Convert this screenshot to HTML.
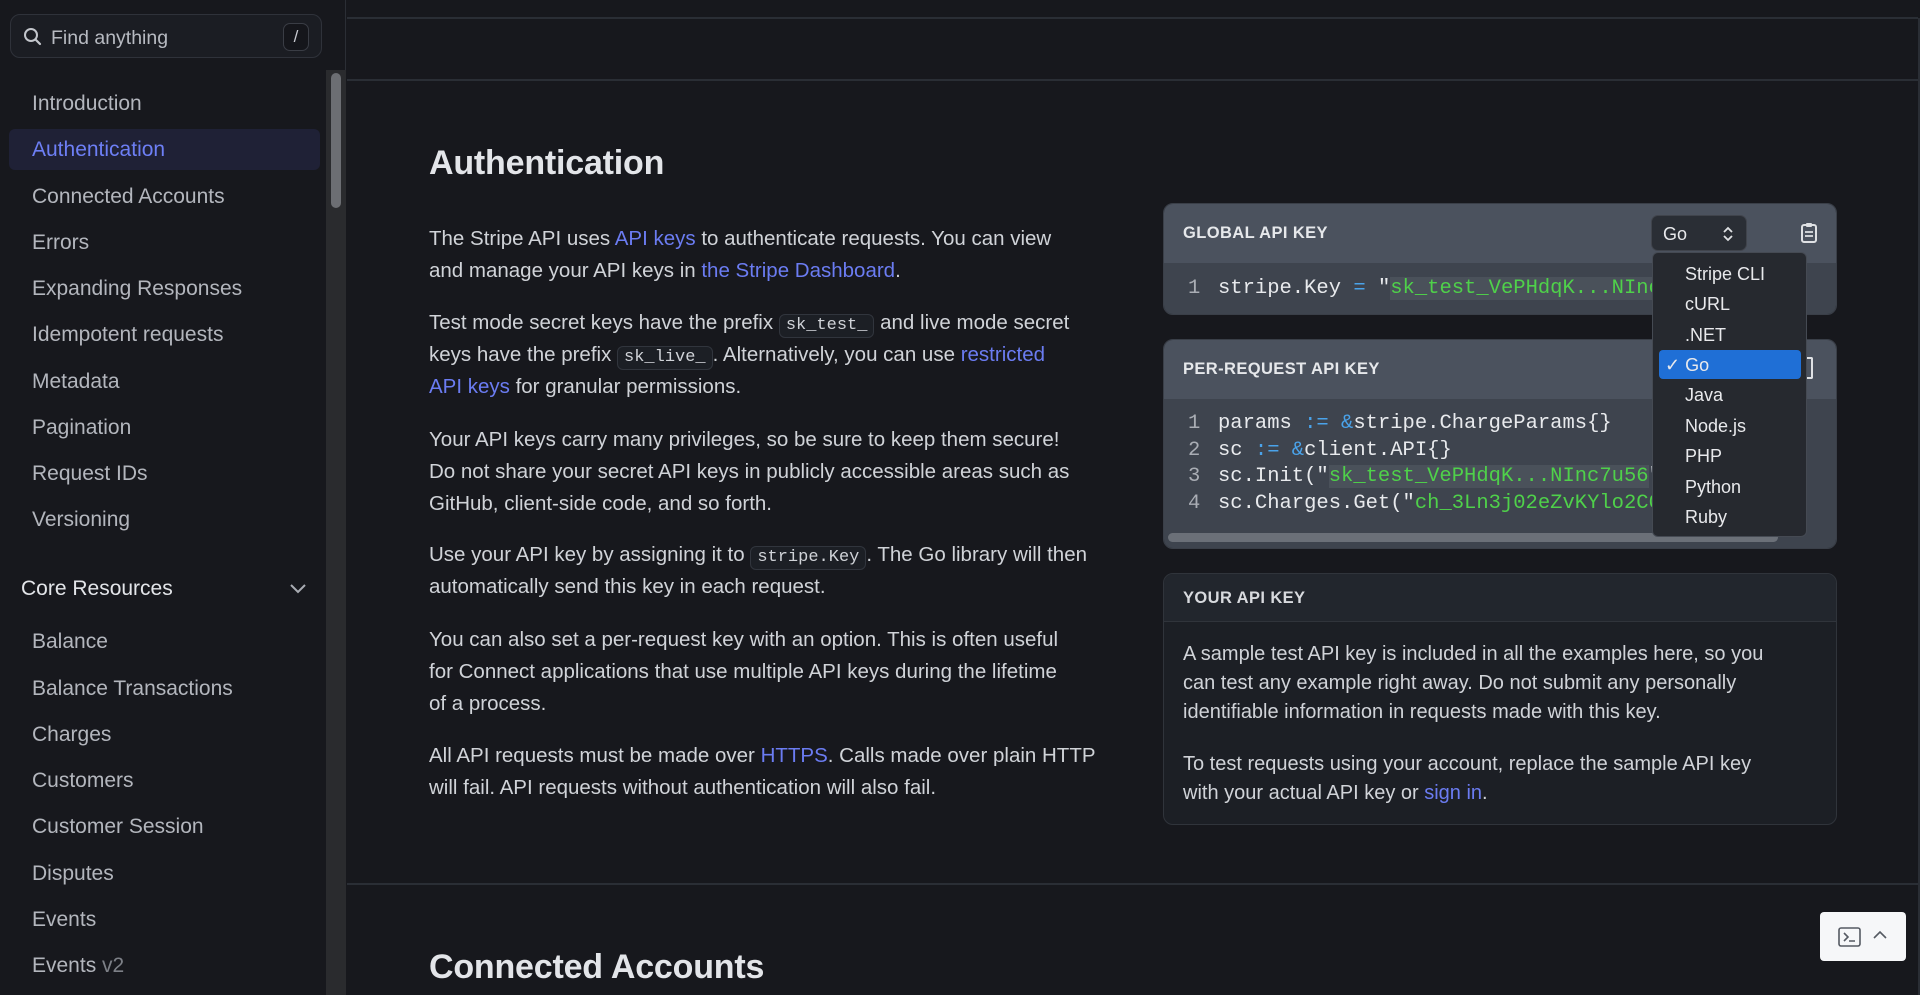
<!DOCTYPE html>
<html><head><meta charset="utf-8"><style>
*{box-sizing:border-box;margin:0;padding:0}
html,body{width:1920px;height:995px;overflow:hidden;background:#17181d;font-family:"Liberation Sans",sans-serif;color:#d4d6db}
.sb{position:absolute;left:0;top:0;width:346px;height:995px;background:#17181d;border-right:1px solid #2b2e35}
.search{position:absolute;left:10px;top:14px;width:312px;height:44px;border:1px solid #2f323a;border-radius:10px;background:#1b1d23}
.search span{position:absolute;left:40px;top:12px;font-size:19.5px;color:#b7bac1}
.kbd{position:absolute;right:12px;top:8px;width:26px;height:28px;border:1px solid #3a3d45;border-radius:7px;color:#c8cad0;font-size:17px;text-align:center;line-height:26px;background:#15161b}
.track{position:absolute;left:326px;top:70px;width:20px;height:925px;background:#2a2b2e}
.thumb{position:absolute;left:331px;top:73px;width:10px;height:135px;background:#6c6e73;border-radius:5px}
.nav{position:absolute;left:32px;font-size:21px;color:#b3b6bd}
.act{position:absolute;left:9px;top:129px;width:311px;height:41px;background:#1f2136;border-radius:6px}
.hl{position:absolute;left:347px;right:2px;height:2px;background:#2a2e35}
h1{position:absolute;left:429px;font-size:34px;font-weight:bold;color:#e3e5e9;letter-spacing:-0.2px}
.p{position:absolute;left:429px;font-size:20.5px;line-height:32px;color:#d0d3d8;white-space:nowrap}
a{color:#6b7cf2;text-decoration:none}
code{font-family:"Liberation Mono",monospace;font-size:17px;background:#1c1f25;border:1px solid #31353d;border-radius:6px;padding:1px 6px;line-height:20px;display:inline-block;vertical-align:baseline}
.card{position:absolute;left:1163px;width:674px;border-radius:10px;overflow:hidden;border:1px solid #3a3f48}
.ch{height:59px;background:#4b525e;padding-left:19px;font-size:16.5px;font-weight:bold;letter-spacing:.4px;line-height:59px;color:#e6e8eb}
.cb{background:#3e444e;font-family:"Liberation Mono",monospace;font-size:20.5px;color:#e8eaed;padding-left:24px;white-space:pre}
.ln{color:#a9adb4;display:inline-block;width:30px}
.g{color:#4fd14a;background:#4a515a}
.g2{color:#4fd14a}
.o{color:#4aa3ea}
.menu{position:absolute;left:1652px;top:252px;width:155px;height:285px;background:#26292f;border:1px solid #454a53;border-radius:6px}
.mi{position:absolute;left:32px;font-size:18px;color:#e8e9ec}
</style></head><body>
<div class="sb">
 <div class="search"><svg style="position:absolute;left:12px;top:12px" width="20" height="20" viewBox="0 0 20 20"><circle cx="8" cy="8" r="6" fill="none" stroke="#c3c6cc" stroke-width="2"/><path d="M12.5 12.5 L17 17" stroke="#c3c6cc" stroke-width="2.2" stroke-linecap="round"/></svg><span>Find anything</span><div class="kbd">/</div></div>
 <div class="track"></div><div class="thumb"></div>
 <div class="act"></div>
 <div class="nav" style="top:92px">Introduction</div>
 <div class="nav" style="top:138px;color:#6d7ff5">Authentication</div>
 <div class="nav" style="top:185px">Connected Accounts</div>
 <div class="nav" style="top:231px">Errors</div>
 <div class="nav" style="top:277px">Expanding Responses</div>
 <div class="nav" style="top:323px">Idempotent requests</div>
 <div class="nav" style="top:370px">Metadata</div>
 <div class="nav" style="top:416px">Pagination</div>
 <div class="nav" style="top:462px">Request IDs</div>
 <div class="nav" style="top:508px">Versioning</div>
 <div class="nav" style="top:577px;left:21px;color:#e3e5e9;font-size:21px">Core Resources</div>
 <svg style="position:absolute;left:289px;top:583px" width="18" height="12" viewBox="0 0 18 12"><path d="M2 2 L9 9 L16 2" fill="none" stroke="#a9acb3" stroke-width="2"/></svg>
 <div class="nav" style="top:630px">Balance</div>
 <div class="nav" style="top:677px">Balance Transactions</div>
 <div class="nav" style="top:723px">Charges</div>
 <div class="nav" style="top:769px">Customers</div>
 <div class="nav" style="top:815px">Customer Session</div>
 <div class="nav" style="top:862px">Disputes</div>
 <div class="nav" style="top:908px">Events</div>
 <div class="nav" style="top:954px">Events <span style="color:#7d8087">v2</span></div>
</div>
<div class="hl" style="top:17px"></div>
<div class="hl" style="top:79px"></div>
<div style="position:absolute;right:0;top:18px;width:2px;height:977px;background:#2a2e35"></div>
<h1 style="top:144px">Authentication</h1>
<div class="p" style="top:223px">The Stripe API uses <a>API keys</a> to authenticate requests. You can view<br>and manage your API keys in <a>the Stripe Dashboard</a>.</div>
<div class="p" style="top:307px">Test mode secret keys have the prefix <code>sk_test_</code> and live mode secret<br>keys have the prefix <code>sk_live_</code>. Alternatively, you can use <a>restricted</a><br><a>API keys</a> for granular permissions.</div>
<div class="p" style="top:424px">Your API keys carry many privileges, so be sure to keep them secure!<br>Do not share your secret API keys in publicly accessible areas such as<br>GitHub, client-side code, and so forth.</div>
<div class="p" style="top:539px">Use your API key by assigning it to <code>stripe.Key</code>. The Go library will then<br>automatically send this key in each request.</div>
<div class="p" style="top:624px">You can also set a per-request key with an option. This is often useful<br>for Connect applications that use multiple API keys during the lifetime<br>of a process.</div>
<div class="p" style="top:740px">All API requests must be made over <a>HTTPS</a>. Calls made over plain HTTP<br>will fail. API requests without authentication will also fail.</div>

<div class="card" style="top:203px;height:112px"><div class="ch">GLOBAL API KEY</div><div class="cb" style="height:53px;padding-top:14px"><span class="ln">1</span>stripe.Key <span class="o">=</span> "<span class="g">sk_test_VePHdqK...NInc7u56</span>"</div></div>
<div class="card" style="top:339px;height:210px"><div class="ch">PER-REQUEST API KEY</div><div class="cb" style="height:151px;padding-top:12px;line-height:26.5px"><span class="ln">1</span>params <span class="o">:= &amp;</span>stripe.ChargeParams{}
<span class="ln">2</span>sc <span class="o">:= &amp;</span>client.API{}
<span class="ln">3</span>sc.Init("<span class="g">sk_test_VePHdqK...NInc7u56</span>", nil)
<span class="ln">4</span>sc.Charges.Get("<span class="g2">ch_3Ln3j02eZvKYlo2C0</span>", params)</div>
 <div style="position:absolute;left:4px;top:193px;width:610px;height:9px;background:#6b7078;border-radius:5px"></div></div>
<div class="card" style="top:573px;height:252px;border-color:#30343b;background:#1c1f25"><div class="ch" style="background:#22262d;height:48px;line-height:48px;border-bottom:1px solid #30343b;color:#d8dade">YOUR API KEY</div>
 <div style="padding:18px 19px;font-size:20px;line-height:29px;color:#d0d3d8;white-space:nowrap">A sample test API key is included in all the examples here, so you<br>can test any example right away. Do not submit any personally<br>identifiable information in requests made with this key.<div style="height:23px"></div>To test requests using your account, replace the sample API key<br>with your actual API key or <a>sign in</a>.</div></div>

<div style="position:absolute;left:1651px;top:215px;width:96px;height:36px;background:#2a2e35;border:1px solid #40444c;border-radius:7px;font-size:18px;color:#e8e9ec;padding:8px 0 0 11px">Go<svg style="position:absolute;right:12px;top:9px" width="12" height="18" viewBox="0 0 12 18"><path d="M2 7 L6 3 L10 7 M2 11 L6 15 L10 11" fill="none" stroke="#e0e2e5" stroke-width="1.8"/></svg></div>
<svg style="position:absolute;left:1800px;top:222px" width="18" height="22" viewBox="0 0 18 22"><rect x="2" y="3" width="14" height="17" rx="2" fill="none" stroke="#dfe1e4" stroke-width="2"/><rect x="6" y="1" width="6" height="4" rx="1" fill="#dfe1e4"/><path d="M5 10h8M5 14h8" stroke="#dfe1e4" stroke-width="1.8"/></svg>
<div style="position:absolute;left:1805px;top:357px;width:8px;height:22px;border:2px solid #dfe1e4;border-left:none;border-radius:0 2px 2px 0"></div>
<div class="menu">
 <div class="mi" style="top:11px">Stripe CLI</div>
 <div class="mi" style="top:41px">cURL</div>
 <div class="mi" style="top:72px">.NET</div>
 <div style="position:absolute;left:6px;top:97px;width:142px;height:29px;background:#1f6fd6;border-radius:4px"></div>
 <div class="mi" style="top:102px;left:12px">✓ Go</div>
 <div class="mi" style="top:132px">Java</div>
 <div class="mi" style="top:163px">Node.js</div>
 <div class="mi" style="top:193px">PHP</div>
 <div class="mi" style="top:224px">Python</div>
 <div class="mi" style="top:254px">Ruby</div>
</div>
<div class="hl" style="top:883px"></div>
<h1 style="top:948px">Connected Accounts</h1>
<div style="position:absolute;left:1820px;top:912px;width:86px;height:49px;background:#f6f7f9;border-radius:4px">
 <svg style="position:absolute;left:18px;top:15px" width="24" height="20" viewBox="0 0 24 20"><rect x="1" y="1" width="21" height="18" rx="2" fill="none" stroke="#555a63" stroke-width="1.6"/><path d="M6 6 L10 10 L6 14 M11 14 H17" fill="none" stroke="#555a63" stroke-width="1.6"/></svg>
 <svg style="position:absolute;left:52px;top:18px" width="16" height="10" viewBox="0 0 16 10"><path d="M2 8 L8 2 L14 8" fill="none" stroke="#555a63" stroke-width="1.6"/></svg>
</div>
</body></html>
